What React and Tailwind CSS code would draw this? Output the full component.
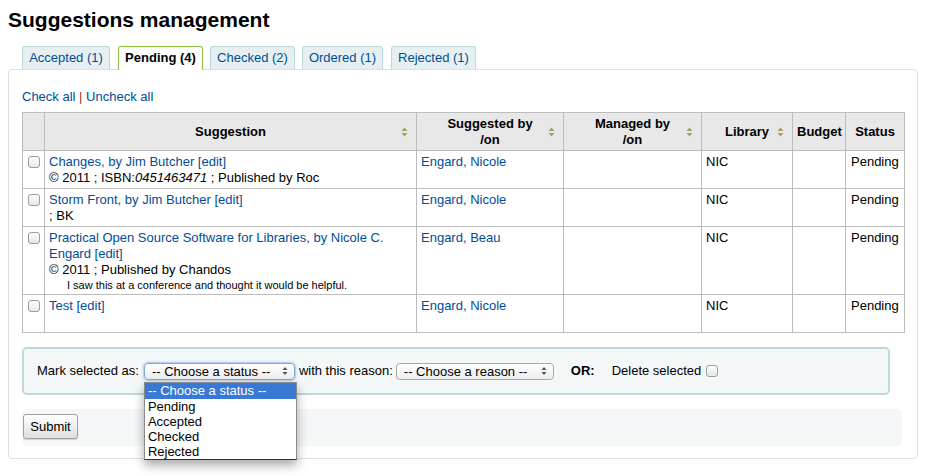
import React from "react";

const LINK = "text-[#004d99]";

function SortIcon() {
  return (
    <svg
      width="7"
      height="10"
      viewBox="0 0 7 10"
      className="absolute right-[8px] top-1/2 -translate-y-1/2"
    >
      <path d="M3.5 0.5 L6.5 4 H0.5 Z" fill="#9ea55c" />
      <path d="M3.5 9.5 L6.5 6 H0.5 Z" fill="#9ea55c" />
    </svg>
  );
}

function Box() {
  return (
    <span className="inline-block w-[12px] h-[12px] rounded-[3px] border border-[#9c9c9c] bg-linear-to-b from-white to-[#e6e6e6] shadow-[0_1px_0_rgba(255,255,255,0.6)]" />
  );
}

function SelectArrow() {
  return (
    <svg width="6" height="9" viewBox="0 0 6 9" className="absolute right-[6px] top-1/2 -translate-y-1/2">
      <path d="M3 0.5 L5.5 3.5 H0.5 Z" fill="#555" />
      <path d="M3 8.5 L5.5 5.5 H0.5 Z" fill="#555" />
    </svg>
  );
}

function Tab({ label, active, className = "" }) {
  if (active) {
    return (
      <div className={`relative z-10 h-[24px] pt-[3px] rounded-t-[3px] border border-b-0 border-[#8cc63f] bg-white font-bold text-black leading-[16px] text-center whitespace-nowrap ${className}`}>
        {label}
      </div>
    );
  }
  return (
    <div className={`h-[23px] pt-[3px] rounded-t-[3px] border border-b-0 border-[#b9d8d9] bg-[#e6f0f2] leading-[16px] text-center whitespace-nowrap ${LINK} ${className}`}>
      {label}
    </div>
  );
}

const th = "relative border border-[#bcbcbc] bg-[#e8e8e8] font-bold text-center align-middle px-[4px] h-[38px]";
const td = "border border-[#bcbcbc] align-top px-[4px] pt-[3px] pb-[2px]";

function Row({ title, details, note, by, extraLine }) {
  return (
    <tr>
      <td className="border border-[#bcbcbc] align-top text-center pt-[5px]">
        <Box />
      </td>
      <td className={td}>
        <div>
          <span className={LINK}>{title}</span> <span className={LINK}>[edit]</span>
        </div>
        {details && <div>{details}</div>}
        {note && <div className="pl-[18px] text-[11px] leading-[14px]">{note}</div>}
        {extraLine && <div>&nbsp;</div>}
      </td>
      <td className={td}>
        <span className={LINK}>{by}</span>
      </td>
      <td className={td}></td>
      <td className={td}>NIC</td>
      <td className={td}></td>
      <td className={`${td} pl-[5px]`}>Pending</td>
    </tr>
  );
}

export default function App() {
  return (
    <div className="w-[926px] h-[476px] bg-white overflow-hidden text-[13px] leading-[16px] text-black font-['Liberation_Sans',Arial,sans-serif]">
      <h1 className="ml-[8px] mt-[8px] text-[21px] leading-[24px] font-bold">Suggestions management</h1>

      <div className="mt-[14px] ml-[22px] flex gap-[7px] h-[23px] items-start">
        <Tab label="Accepted (1)" className="w-[88px]" />
        <Tab label="Pending (4)" active className="w-[85px] ml-[1px]" />
        <Tab label="Checked (2)" className="w-[85px]" />
        <Tab label="Ordered (1)" className="w-[81px]" />
        <Tab label="Rejected (1)" className="w-[85px] ml-[1px]" />
      </div>

      <div className="ml-[8px] w-[910px] h-[390px] border border-[#e0e0e0] rounded-[4px] pt-[19px] pl-[13px]">
        <div>
          <span className={LINK}>Check all</span> <span className="text-[#8a3b12]">|</span>{" "}
          <span className={LINK}>Uncheck all</span>
        </div>

        <table className="mt-[7px] w-[882px] table-fixed border-collapse">
          <colgroup>
            <col className="w-[22px]" />
            <col className="w-[372px]" />
            <col className="w-[147px]" />
            <col className="w-[138px]" />
            <col className="w-[91px]" />
            <col className="w-[53px]" />
            <col className="w-[59px]" />
          </colgroup>
          <thead>
            <tr>
              <th className={th}></th>
              <th className={th}>
                Suggestion
                <SortIcon />
              </th>
              <th className={th}>
                Suggested by
                <br />
                /on
                <SortIcon />
              </th>
              <th className={th}>
                Managed by
                <br />
                /on
                <SortIcon />
              </th>
              <th className={th}>
                Library
                <SortIcon />
              </th>
              <th className={th}>Budget</th>
              <th className={th}>Status</th>
            </tr>
          </thead>
          <tbody>
            <Row
              title="Changes, by Jim Butcher"
              details={
                <>
                  © 2011 ; ISBN:<i>0451463471</i> ; Published by Roc
                </>
              }
              by="Engard, Nicole"
            />
            <Row title="Storm Front, by Jim Butcher" details="; BK" by="Engard, Nicole" />
            <Row
              title="Practical Open Source Software for Libraries, by Nicole C. Engard"
              details="© 2011 ; Published by Chandos"
              note="I saw this at a conference and thought it would be helpful."
              by="Engard, Beau"
            />
            <Row title="Test" by="Engard, Nicole" extraLine />
          </tbody>
        </table>

        <div className="mt-[14px] w-[868px] h-[48px] rounded-[5px] border-2 border-[#bcd9dc] bg-[#f3f7f8] flex items-center pl-[13px]">
          <span>Mark selected as:</span>
          <div className="relative ml-[5px]">
            <div className="relative w-[151px] h-[17px] rounded-[4px] border border-[#7fa9d9] shadow-[0_0_2px_1px_rgba(110,160,220,0.55)] bg-linear-to-b from-white to-[#ededed] pl-[7px] leading-[15px]">
              -- Choose a status --
              <SelectArrow />
            </div>
            <div className="absolute left-0 top-[19px] z-20 w-[153px] bg-white border border-[#8a8a8a] border-b-[#333] shadow-[0_5px_10px_rgba(0,0,0,0.35)]">
              <div className="h-[16px] leading-[16px] pl-[3px] bg-[#3a78d6] text-white">-- Choose a status --</div>
              <div className="h-[15px] leading-[15px] pl-[3px]">Pending</div>
              <div className="h-[15px] leading-[15px] pl-[3px]">Accepted</div>
              <div className="h-[15px] leading-[15px] pl-[3px]">Checked</div>
              <div className="h-[15px] leading-[15px] pl-[3px]">Rejected</div>
            </div>
          </div>
          <span className="ml-[4px]">with this reason:</span>
          <div className="relative ml-[3px] w-[158px] h-[17px] rounded-[4px] border border-[#a9a9a9] bg-linear-to-b from-white to-[#ededed] pl-[7px] leading-[15px]">
            -- Choose a reason --
            <SelectArrow />
          </div>
          <span className="ml-[17px] font-bold">OR:</span>
          <span className="ml-[17px]">Delete selected</span>
          <span className="ml-[5px] flex">
            <Box />
          </span>
        </div>

        <div className="mt-[14px] w-[880px] h-[37px] rounded-[5px] bg-[#f3f7f8] pt-[5px] pl-[1px]">
          <div className="w-[55px] h-[25px] rounded-[3px] border border-[#a0a0a0] bg-linear-to-b from-white to-[#dedede] shadow-[0_1px_1px_rgba(0,0,0,0.15)] flex items-center justify-center">
            Submit
          </div>
        </div>
      </div>
    </div>
  );
}
